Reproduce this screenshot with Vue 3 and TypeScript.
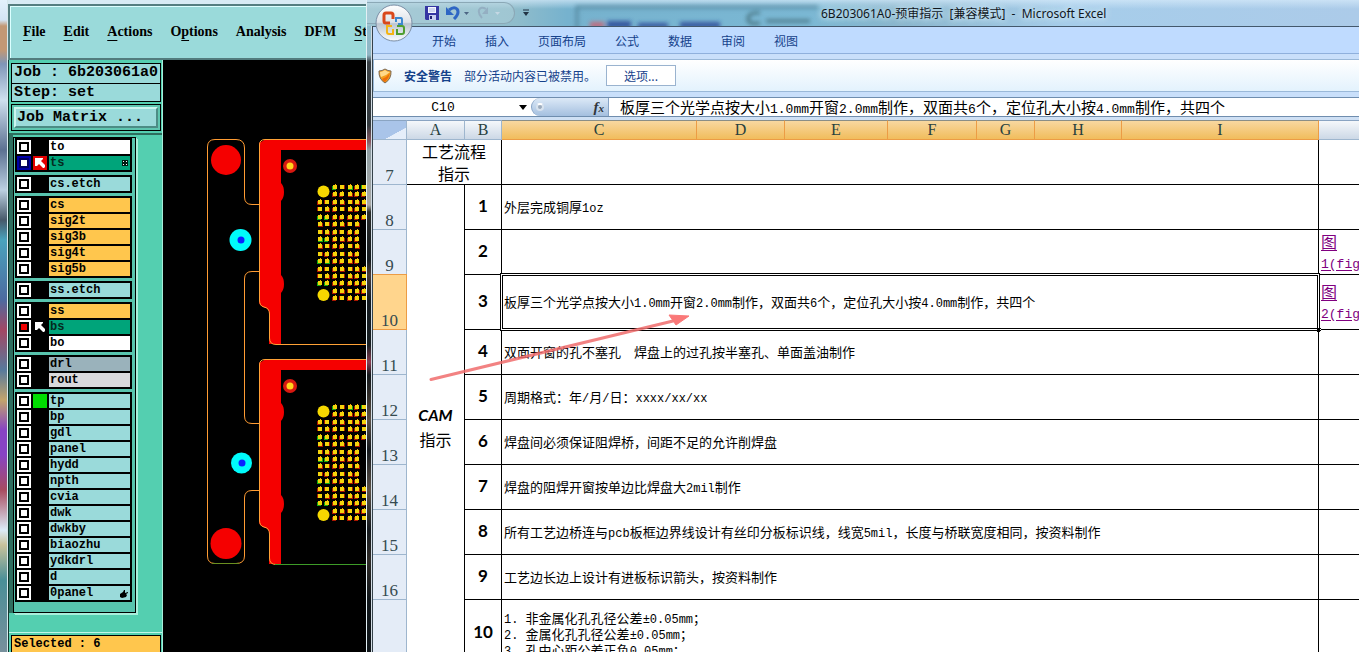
<script setup lang="ts">
import { ref } from 'vue'

interface Layer { name: string; kind: string; on?: boolean; mark?: string; tail?: string }
interface MenuEntry { pre: string; key: string; post: string }
interface Pad { x: number; y: number; green: boolean; dx: number; dy: number }
interface Row { no: number; item: string; lines: string[]; link?: string[]; cls?: string }

const menu: MenuEntry[] = [
  { pre: '', key: 'F', post: 'ile' },
  { pre: '', key: 'E', post: 'dit' },
  { pre: '', key: 'A', post: 'ctions' },
  { pre: 'O', key: 'p', post: 'tions' },
  { pre: 'Analysis', key: '', post: '' },
  { pre: 'DFM', key: '', post: '' },
  { pre: '', key: 'S', post: 't' },
]

const cyan = (name: string): Layer => ({ name, kind: 'cyan' })
const amber = (name: string): Layer => ({ name, kind: 'amber' })

const groups = ref<Layer[][]>([
  [{ name: 'to', kind: 'white' }, { name: 'ts', kind: 'active blue', on: true, mark: 'redarrow', tail: 'grid' }],
  [cyan('cs.etch')],
  ['cs', 'sig2t', 'sig3b', 'sig4t', 'sig5b'].map(amber),
  [cyan('ss.etch')],
  [amber('ss'), { name: 'bs', kind: 'active', on: true, mark: 'arrow' }, { name: 'bo', kind: 'white' }],
  [{ name: 'drl', kind: 'slate' }, { name: 'rout', kind: 'silver' }],
  [
    { name: 'tp', kind: 'cyan', mark: 'green' },
    ...['bp', 'gdl', 'panel', 'hydd', 'npth', 'cvia', 'dwk', 'dwkby', 'biaozhu', 'ydkdrl', 'd'].map(cyan),
    { name: '0panel', kind: 'cyan', tail: 'hand' },
  ],
])

const pads: Pad[] = []
const padX = [157, 164, 172, 179, 187, 194, 201]
for (let r = 0; r < 16; r++) {
  for (let c = 0; c < 7; c++) {
    const edge = r < 2 || r > 13
    if (edge && c < 2) continue
    if (c === 6 && r > 4 && r < 11) continue
    const seed = (r * 7 + c * 5 + r * c) % 9
    pads.push({
      x: padX[c], y: 127 + Math.round(r * 7.42),
      green: (c < 2 && seed % 3 === 1) || (r === 0 && c % 2 === 0),
      dx: seed % 2 ? -1 : 0, dy: seed % 3 ? 1 : 0,
    })
  }
}
const boards = [0, 220]

const tabs = ['开始', '插入', '页面布局', '公式', '数据', '审阅', '视图']
const cellText = '板厚三个光学点按大小1.0mm开窗2.0mm制作，双面共6个，定位孔大小按4.0mm制作，共四个'
const rows: Row[] = [
  { no: 8, item: '1', lines: ['外层完成铜厚1oz'] },
  { no: 9, item: '2', lines: [''], link: ['图', '1(fig'] },
  { no: 10, item: '3', lines: [cellText], link: ['图', '2(fig'], cls: 'current' },
  { no: 11, item: '4', lines: ['双面开窗的孔不塞孔\u3000焊盘上的过孔按半塞孔、单面盖油制作'] },
  { no: 12, item: '5', lines: ['周期格式：年/月/日：xxxx/xx/xx'] },
  { no: 13, item: '6', lines: ['焊盘间必须保证阻焊桥，间距不足的允许削焊盘'] },
  { no: 14, item: '7', lines: ['焊盘的阻焊开窗按单边比焊盘大2mil制作'] },
  { no: 15, item: '8', lines: ['所有工艺边桥连与pcb板框边界线设计有丝印分板标识线，线宽5mil，长度与桥联宽度相同，按资料制作'] },
  { no: 16, item: '9', lines: ['工艺边长边上设计有进板标识箭头，按资料制作'] },
  { no: 17, item: '10', cls: 'tall', lines: ['1. 非金属化孔孔径公差±0.05mm；', '2. 金属化孔孔径公差±0.05mm；', '3. 孔中心距公差正负0.05mm；'] },
]
const columns = ['C', 'D', 'E', 'F', 'G', 'H', 'I']

// Splits a string into alternating CJK and half-width runs.
function runs(text: string): { t: string; half: boolean }[] {
  return (text.match(/[\x20-\x7e±]+|[^\x20-\x7e±]+/g) ?? []).map(t => ({ t, half: /^[\x20-\x7e±]/.test(t) }))
}
</script>

<template>
  <div class="desktop">
    <div class="glimpse"></div>
    <section class="cam">
      <nav class="menubar">
        <button v-for="m in menu" :key="m.pre + m.key + m.post" type="button">{{ m.pre }}<u v-if="m.key">{{ m.key }}</u>{{ m.post }}</button>
      </nav>
      <div class="work">
        <aside class="side">
          <div class="info">
            <div>Job : 6b203061a0</div>
            <div>Step: set</div>
          </div>
          <div class="matrix"><button type="button">Job Matrix ...</button></div>
          <div class="well">
            <div class="list">
              <div v-for="(g, gi) in groups" :key="gi" class="group">
                <label v-for="l in g" :key="l.name" class="layer" :class="l.kind">
                  <input v-model="l.on" type="checkbox">
                  <span class="mark" :class="l.mark">
                    <svg v-if="l.mark && l.mark !== 'green'" viewBox="0 0 14 14" width="14" height="14"><path d="M2 2H10V3L8 5L12 9V11L11 12H10L6 8L4 10H2Z" fill="#fff" /></svg>
                  </span>
                  <span class="name">{{ l.name }}
                    <svg v-if="l.tail === 'grid'" class="tail" viewBox="0 0 6 6" width="6" height="6"><path d="M0 0H6V6H0Z" fill="#001c12" /><path d="M1 1h1v1h-1zM4 1h1v1h-1zM1 4h1v1h-1zM4 4h1v1h-1z" fill="#fff" /></svg>
                    <svg v-if="l.tail === 'hand'" class="tail" viewBox="0 0 8 8" width="8" height="8"><path d="M0 4L3 2L4 0H5L5 3L8 2V3L6 4L7 5L6 7L2 8L0 7Z" fill="#000" /></svg>
                  </span>
                </label>
              </div>
            </div>
          </div>
          <div class="selected">Selected : 6</div>
        </aside>
        <div class="canvas">
          <svg viewBox="0 0 203 592" width="203" height="592" aria-label="board">
            <g v-for="dy in boards" :key="dy" :transform="`translate(0 ${dy})`">
              <path d="M103 79H203V90H118V123Q121 126 121 132Q121 138 118 141V215Q121 218 121 224Q121 230 118 233V284H106V252Q106 249 100 247Q96 245 96 242V83Z" fill="#f50000" />
              <path d="M203 79.500H102Q96.500 79.500 96.500 85V240Q96.500 246 101 247Q106.500 248 106.500 254V278Q106.500 284.500 113 284.500H203" fill="none" stroke="#ffa236" stroke-width="1" />
              <path v-if="dy" d="M112 284.500H203" stroke="#3d9b28" />
              <circle cx="127" cy="106" r="7" fill="#d81810" /><circle cx="127" cy="106" r="3.500" fill="#ffd21c" />
              <g v-for="(p, i) in pads" :key="i">
                <rect :x="p.x - 2 + p.dx" :y="p.y - 2 + p.dy" :width="p.dx ? 4 : 5" height="4" :fill="p.green ? '#13a912' : '#a91600'" />
                <rect :x="p.x - 2" :y="p.y - 2" width="4" height="4" fill="#f4d40c" />
                <rect v-if="p.dy" :x="p.x" :y="p.y - 3" width="1" height="1" fill="#f5a800" />
              </g>
              <circle cx="160.500" cy="131.500" r="6" fill="#f6d800" /><circle cx="160.500" cy="235" r="6" fill="#f6d800" />
            </g>
            <g fill="none" stroke="#ff9c33" stroke-width="1">
              <path d="M44.500 496V87Q44.500 79.500 52 79.500H73Q81.500 79.500 81.500 88V137Q81.500 144.500 89 144.500H96" />
              <path d="M96 211.500H89Q81.500 211.500 81.500 219V356Q81.500 363.500 89 363.500H96" />
              <path d="M96 430.500H89Q81.500 430.500 81.500 438V496Q81.500 503.500 73 503.500H52Q44.500 503.500 44.500 496" />
            </g>
            <path d="M49 503.500H76" stroke="#6a8f20" />
            <circle cx="63" cy="100" r="15" fill="#f50000" /><circle cx="63" cy="483.500" r="15.500" fill="#f50000" />
            <circle cx="77.500" cy="180" r="11" fill="#00fbfb" /><circle cx="78" cy="180" r="3.500" fill="#0a22ff" />
            <circle cx="78.500" cy="403" r="10.500" fill="#00fbfb" /><circle cx="79" cy="403" r="3.500" fill="#0a22ff" />
          </svg>
        </div>
      </div>
    </section>

    <section class="excel">
      <header class="title">
        <svg class="ghost" viewBox="0 0 340 26" width="340" height="26" aria-hidden="true">
          <defs><filter id="soft" x="-5%" y="-30%" width="110%" height="160%"><feGaussianBlur stdDeviation="2" /></filter></defs>
          <g filter="url(#soft)">
            <path d="M47 30V7H288" fill="none" stroke="#4f8298" stroke-width="3" />
            <path d="M60 22h14v6h-14z" fill="#d25a6a" /><path d="M77 21h24v7h-24zM108 23h30v5h-30zM150 22h40v6h-40z" fill="#263f93" />
            <path d="M230 13q-12 -1 -12 6q0 6 12 4M236 21h44" fill="none" stroke="#3d6570" stroke-width="3" />
          </g>
        </svg>
        <button class="orb" type="button" aria-label="Office">
          <svg viewBox="0 0 38 38" width="38" height="38">
            <defs><linearGradient id="orbg" x1="0" y1="0" x2="0" y2="1"><stop offset="0" stop-color="#fff" /><stop offset=".48" stop-color="#dde2e8" /><stop offset=".52" stop-color="#bcc5d0" /><stop offset="1" stop-color="#fafdff" /></linearGradient></defs>
            <circle cx="19" cy="19" r="18" fill="url(#orbg)" stroke="#7a8ea6" />
            <g fill="none" stroke-width="3">
              <path d="M18 15V11Q18 9 16 9H11Q9 9 9 11V17Q9 19 11 19H15" stroke="#d9471b" />
              <path d="M21 18V14H26Q27 14 27 16V20H23" stroke="#3c88d0" stroke-width="2" />
              <path d="M17 22H12V28Q12 30 14 30H18V25" stroke="#f4b414" stroke-width="2" />
              <path d="M22 22H27Q29 22 29 24V28Q29 30 27 30H22V25" stroke="#4f9e2f" stroke-width="2" />
            </g>
          </svg>
        </button>
        <div class="quick">
          <button type="button" aria-label="Save"><svg viewBox="0 0 14 14" width="14" height="14"><path d="M0 0H14V14H1L0 13Z" fill="#3536a3" /><path d="M3 1H11V7H3Z" fill="#f5f7ff" /><path d="M4 3H10M4 5H10" stroke="#aab4e0" /><path d="M4 9H11V14H4Z" fill="#c9cff0" /><path d="M5 10h2v3h-2z" fill="#20216f" /></svg></button>
          <button type="button" aria-label="Undo"><svg viewBox="0 0 24 14" width="24" height="14"><path d="M3 4Q8 0 11 3Q14 7 8 13" fill="none" stroke="#2e66c4" stroke-width="3" /><path d="M0 1V9H8Z" fill="#2e66c4" /><path d="M18 6H23L20.500 9Z" fill="#4d6684" /></svg></button>
          <button type="button" aria-label="Redo"><svg viewBox="0 0 24 14" width="24" height="14"><path d="M9 3Q4 0 2 4Q1 8 5 12" fill="none" stroke="#94afc2" stroke-width="2" /><path d="M11 1V8H5Z" fill="#94afc2" /><path d="M18 6H23L20.500 9Z" fill="#c5d8e4" /></svg></button>
        </div>
        <button class="more" type="button" aria-label="Customize"><svg viewBox="0 0 6 8" width="6" height="8"><path d="M0 1H6" stroke="#234" /><path d="M0 3H6L3 7Z" fill="#234" /></svg></button>
        <h1>6B203061A0-预审指示&nbsp; [兼容模式]&nbsp; -&nbsp; Microsoft Excel</h1>
      </header>
      <nav class="tabs"><button v-for="t in tabs" :key="t" type="button">{{ t }}</button></nav>
      <div class="warning">
        <svg viewBox="0 0 14 16" width="14" height="16"><path d="M7 1Q10 3 13 3Q13.500 11 7 15Q.5 11 1 3Q4 3 7 1Z" fill="#f5a01c" stroke="#7b6a58" /><path d="M7 2Q4 4 2 4Q2 7 3 9Q8 8 12 4Q9 4 7 2Z" fill="#ffd98a" /><path d="M12 5Q11 10 7 14Q5 13 4 11Q9 9 12 5Z" fill="#ee6d0a" /></svg>
        <strong>安全警告</strong><span>部分活动内容已被禁用。</span>
        <button type="button">选项...</button>
      </div>
      <div class="formula">
        <div class="namebox"><span>C10</span><svg viewBox="0 0 8 5" width="8" height="5"><path d="M0 0H8L4 5Z" fill="#000" /></svg></div>
        <div class="fx"><i class="knob"></i><em>f<small>x</small></em></div>
        <div class="entry"><span v-for="(r, i) in runs(cellText)" :key="i" :class="{ half: r.half }">{{ r.t }}</span></div>
      </div>
      <div class="sheet">
        <table>
          <colgroup><col class="w-head"><col class="w-a"><col class="w-b"><col v-for="c in columns" :key="c" :class="'w-' + c.toLowerCase()"><col></colgroup>
          <thead>
            <tr><th class="corner"></th><th>A</th><th>B</th><th v-for="c in columns" :key="c" class="hot">{{ c }}</th><th></th></tr>
          </thead>
          <tbody>
            <tr><th class="rowno">7</th><td class="flow" colspan="2">工艺流程<br>指示</td><td colspan="7"></td><td class="last"></td></tr>
            <tr v-for="r in rows" :key="r.no" :class="r.cls">
              <th class="rowno" :class="{ hotrow: r.no === 10 }">{{ r.no < 17 ? r.no : '' }}</th>
              <td v-if="r.no === 8" class="camcell" :rowspan="rows.length"><b>CAM</b><br>指示</td>
              <td class="item">{{ r.item }}</td>
              <td class="text" colspan="7">
                <div v-for="(line, li) in r.lines" :key="li"><span v-for="(s, i) in runs(line)" :key="i" :class="{ half: s.half }">{{ s.t }}</span></div>
                <p v-if="r.no === 10" class="cursor"><i></i></p>
              </td>
              <td class="last"><a v-if="r.link" href="#">{{ r.link[0] }}<br><span>{{ r.link[1] }}</span></a></td>
            </tr>
          </tbody>
        </table>
        <svg class="pointer" viewBox="0 0 264 68" width="264" height="68" aria-hidden="true"><path d="M2 65.500L244 7" stroke="#f06c6c" stroke-opacity=".85" stroke-width="3" stroke-linecap="round" /><path d="M260 2L240 1L247 11Z" fill="#fa7878" stroke="#fa7878" /></svg>
      </div>
    </section>
  </div>
</template>

<style>
html, body { margin: 0; background: #000; }
</style>

<style scoped>
* { box-sizing: border-box; }
button { font: inherit; color: inherit; background: none; border: 0; padding: 0; margin: 0; white-space: nowrap; }
svg { display: block; flex: none; }
.desktop { display: flex; height: 100vh; overflow: hidden; font-family: "Noto Sans CJK SC", sans-serif; font-size: 12px; color: #000; }
.glimpse { flex: none; width: 8px; border-right: 1px solid #d6e8ec; background: linear-gradient(#e4f2fc 0, #d3e4f4 20px, #c29875 26px, #c29875 50px, #7f96b8 64px, #cfe0ef 100px, #5c7192 150px, #bcd0e2 190px, #47596a 220px, #49a3bd 240px, #4d6aa0 300px, #a34764 330px, #577a9c 370px, #c3a46c 400px, #8744c4 430px, #8744c4 455px, #a84c60 490px, #dcebf8 530px, #c8c29b 545px, #4a8f98 580px, #78909c 652px); }

/* CAM window */
.cam { flex: none; width: 358px; display: flex; flex-direction: column; overflow: hidden; padding-top: 4px; background: #d8ebf4; font-weight: bold; }
.menubar { flex: none; display: flex; align-items: center; gap: 18px; height: 56px; padding: 0 0 0 13px; border: solid #557e80; border-width: 2px 0 2px 2px; border-bottom-color: #527b7d; background: #9adada; box-shadow: inset 1px 1px #dcffff, 0 2px #c7ecec; overflow: hidden; font: bold 14px "Liberation Serif", serif; }
.menubar u { text-underline-offset: 4px; text-decoration-thickness: 1px; }
.work { flex: 1; display: flex; min-height: 0; background: #000; border-left: 1px solid #10362e; }
.side { flex: none; width: 154px; display: flex; flex-direction: column; background: #54cfb0; border-right: 1px solid #a6eedb; font-family: "Liberation Mono", monospace; overflow: hidden; }
.info { margin: 3px 1px 0 2px; border: 1px solid #000; font-size: 15px; line-height: 18px; background: #9adada; }
.info div { height: 19px; padding-left: 2px; white-space: nowrap; }
.info div + div { border-top: 1px solid #000; height: 18px; line-height: 17px; }
.matrix { margin: 2px 1px 0 2px; padding: 2px; height: 27px; border: 1px solid #000; background: #5fc6b0; }
.matrix button { display: block; width: 100%; height: 21px; padding-left: 1px; text-align: left; line-height: 17px; font-size: 15px; background: #9adada; border: 2px solid; border-color: #ccf5ef #4c8c85 #4c8c85 #ccf5ef; }
.well { flex: 1; margin-top: 2px; padding: 2px 0 0 4px; border-top: 2px solid #2d6e5e; background: linear-gradient(90deg, #2f6e60 4px, transparent 4px) 0 0 / 100% 478px no-repeat; border-bottom: 1px solid #c2f7e8; }
.list { display: flex; flex-direction: column; gap: 3px; width: 123px; padding: 0 2px 10px 1px; border: 1px solid #000; background: #58c4ae; box-shadow: 1px 1px #a9efdc, 2px 2px #a9efdc; }
.group { display: flex; flex-direction: column; gap: 2px; padding: 2px; width: 117px; background: #000; }
.layer { display: flex; gap: 2px; height: 14px; }
.layer input { appearance: none; flex: none; margin: 0; width: 14px; height: 14px; border: 2px solid #fff; background: #fff; box-shadow: inset 0 0 0 2px #000; }
.layer input:checked { background: #f00000; box-shadow: inset 0 0 0 2px #000; }
.blue input:checked { border-color: #0000a8; background: #fff; box-shadow: inset 0 0 0 2px #000060; }
.mark { flex: none; width: 14px; height: 14px; }
.mark.green { background: #00dc00; }
.mark.redarrow { background: #e40000; }
.name { flex: 1; position: relative; padding-left: 1px; font-size: 12px; line-height: 14px; background: #9adada; white-space: nowrap; }
.tail { position: absolute; right: 2px; top: 4px; }
.white .name { background: #fff; }
.amber .name { background: #ffc64d; }
.active .name { background: #00a47a; color: #042b1e; }
.slate .name { background: #9ab2bb; }
.silver .name { background: #d9d9dc; }
.selected { flex: none; height: 17px; margin: 2px 1px 0 2px; padding-left: 2px; border: 1px solid #000; border-bottom: 0; background: #ffc64d; font-size: 12px; line-height: 16px; }
.canvas { flex: 1; overflow: hidden; }

/* Spreadsheet window */
.excel { flex: 1; min-width: 0; display: flex; flex-direction: column; overflow: hidden; border-left: 1px solid #e3f0f5; padding-left: 6px; color: #15428b; background: linear-gradient(90deg, rgb(255 255 255 / 0) 4px, #d4dee6 4px, #d4dee6 5px, #35424a 5px, #35424a 6px, transparent 6px), linear-gradient(#8ec0d2 0, #8fb6c4 55px, #3a4146 62px, #333a3e 125px, #8d5a64 142px, #8e9da2 150px, #a9a9a6 205px, #2a2d2b 212px, #141a1e 260px, #4a3c38 275px, #131a1f 300px, #181f22 345px, #8a3d52 362px, #14191d 375px, #302c28 395px, #5b5148 420px, #14191d 450px, #5b5148 490px, #14191d 530px, #302c28 560px, #10161a 600px); }
.title { position: relative; flex: none; display: flex; align-items: center; height: 26px; margin-left: -6px; background: linear-gradient(rgb(215 235 250 / .7), rgb(255 255 255 / 0) 9px), linear-gradient(90deg, #9dc5d2 0, #8fbccb 150px, #76b2ce 200px, #7bb8d4 440px, #8ab6cd 530px, #a6cdea 700px, #accbe9 100%); }
.ghost { position: absolute; left: 163px; top: 0; overflow: hidden; opacity: .8; }
.orb { position: absolute; left: 8px; top: 4px; z-index: 2; }
.quick { display: flex; align-items: center; gap: 7px; width: 148px; height: 22px; padding-left: 58px; border: 1px solid #8ba8b6; border-left: 0; border-radius: 0 11px 11px 0; background: rgb(180 210 220 / .45); }
.more { margin-left: 8px; }
.title h1 { position: relative; margin: 0 0 0 292px; font: 12px "Noto Sans", "Noto Sans CJK SC", sans-serif; color: #10161c; white-space: pre; text-shadow: 0 0 6px #d9effb, 0 0 6px #d9effb; }
.tabs { flex: none; display: flex; align-items: center; gap: 29px; height: 28px; padding-left: 59px; border-top: 1px solid #43586c; border-bottom: 1px solid #8fb0dc; background: #bfdbff; }
.warning { position: relative; flex: none; display: flex; align-items: center; height: 33px; margin-top: 5px; padding-left: 4px; border: 1px solid #9ab8d8; border-right: 0; background: linear-gradient(#fff, #e3f2fd); box-shadow: 0 -5px #c9dffa, 0 5px #c9dffa; }
.warning strong { margin-left: 12px; }
.warning span { margin-left: 12px; }
.warning button { width: 70px; height: 21px; margin-left: 10px; border: 1px solid #9ab3cf; background: #fff; }
.formula { flex: none; display: flex; height: 20px; margin-top: 5px; border: solid #6f8dae; border-width: 1px 0; background: #fff; color: #000; box-shadow: 0 4px #cfe0f4; }
.namebox { display: flex; align-items: center; width: 154px; flex: none; }
.namebox span { flex: 1; padding-right: 6px; text-align: center; font: 13px "Liberation Mono", monospace; }
.fx { flex: none; display: flex; align-items: center; justify-content: space-between; width: 78px; margin-left: 4px; padding: 0 4px; border: 1px solid #86a3c6; border-width: 0 1px; border-radius: 9px 0 0 9px; background: linear-gradient(#dce9f7, #a4bfdf); }
.knob { width: 8px; height: 8px; border-radius: 50%; background: #9cabbc; border: 2px solid #d7e2ee; border-top-color: #fff; }
.fx em { font: italic bold 15px "Liberation Serif", serif; color: #30363c; }
.fx small { font-size: 11px; }
.entry { flex: 1; min-width: 0; padding-left: 11px; font-size: 15px; line-height: 18px; white-space: nowrap; }
.half { font-family: "Liberation Mono", monospace; font-size: 13px; line-height: 1; }
.sheet { position: relative; flex: 1; min-height: 0; margin-top: 3px; overflow: hidden; background: #fff; color: #000; }
table { width: 100%; table-layout: fixed; border-collapse: separate; border-spacing: 0; }
.w-head { width: 34px; } .w-a { width: 58px; } .w-b { width: 37px; } .w-c { width: 195px; } .w-d { width: 88px; }
.w-e { width: 103px; } .w-f { width: 89px; } .w-g { width: 58px; } .w-h { width: 87px; } .w-i { width: 197px; }
th, td { padding: 0; height: 45px; border: solid #000; border-width: 0 1px 1px 0; }
thead th { height: 20px; border-color: #9eb6ce; border-top: 1px solid #8aa4c2; background: linear-gradient(#f5f8fb, #ccd8e6); font: 16px/16px "Liberation Serif", serif; color: #27413e; }
thead .corner { background: linear-gradient(to bottom right, #a9c4e9 68%, #e5eefa 69%); }
thead .hot { border-color: #ec9c45; border-top-color: #8a8e86; background: linear-gradient(#f8d8a0, #f1bd5c); }
thead th:last-child { border-right: 0; }
.rowno { vertical-align: bottom; border-color: #9eb6ce; background: #e4ecf7; color: #354a50; font: 17px/16px "Liberation Serif", serif; }
.hotrow { background: #ffd58d; border-color: #ec9c45; box-shadow: 0 -1px #ec9c45; }
.flow, .camcell { font-size: 16px; line-height: 24px; text-align: center; }
.flow { line-height: 22px; }
.camcell b { font: italic bold 16px/24px Lato, sans-serif; }
.item { padding-bottom: 3px; text-align: center; font: bold 17px/20px Lato, sans-serif; }
.text { position: relative; padding-left: 2px; font-size: 13px; line-height: 16px; white-space: nowrap; }
.text div { height: 16px; }
.text .half { font-size: 12px; white-space: pre; }
.current td, .current th { height: 55px; }
.tall td, .tall th { height: 68px; }
.last { border-right: 0; padding-left: 2px; font-size: 16px; line-height: 20px; white-space: nowrap; }
.last a { color: #800080; text-underline-offset: 2px; }
.last span { font: 13px/18px "Liberation Mono", monospace; }
.cursor { position: absolute; inset: -2px; margin: 0; border: 1px solid #000; box-shadow: inset 0 0 0 1px #fff, inset 0 0 0 2px #000; pointer-events: none; }
.cursor i { position: absolute; right: -2px; bottom: -2px; width: 5px; height: 5px; background: #000; border: 1px dotted #fff; }
.pointer { position: absolute; left: 56px; top: 194px; pointer-events: none; }
</style>
